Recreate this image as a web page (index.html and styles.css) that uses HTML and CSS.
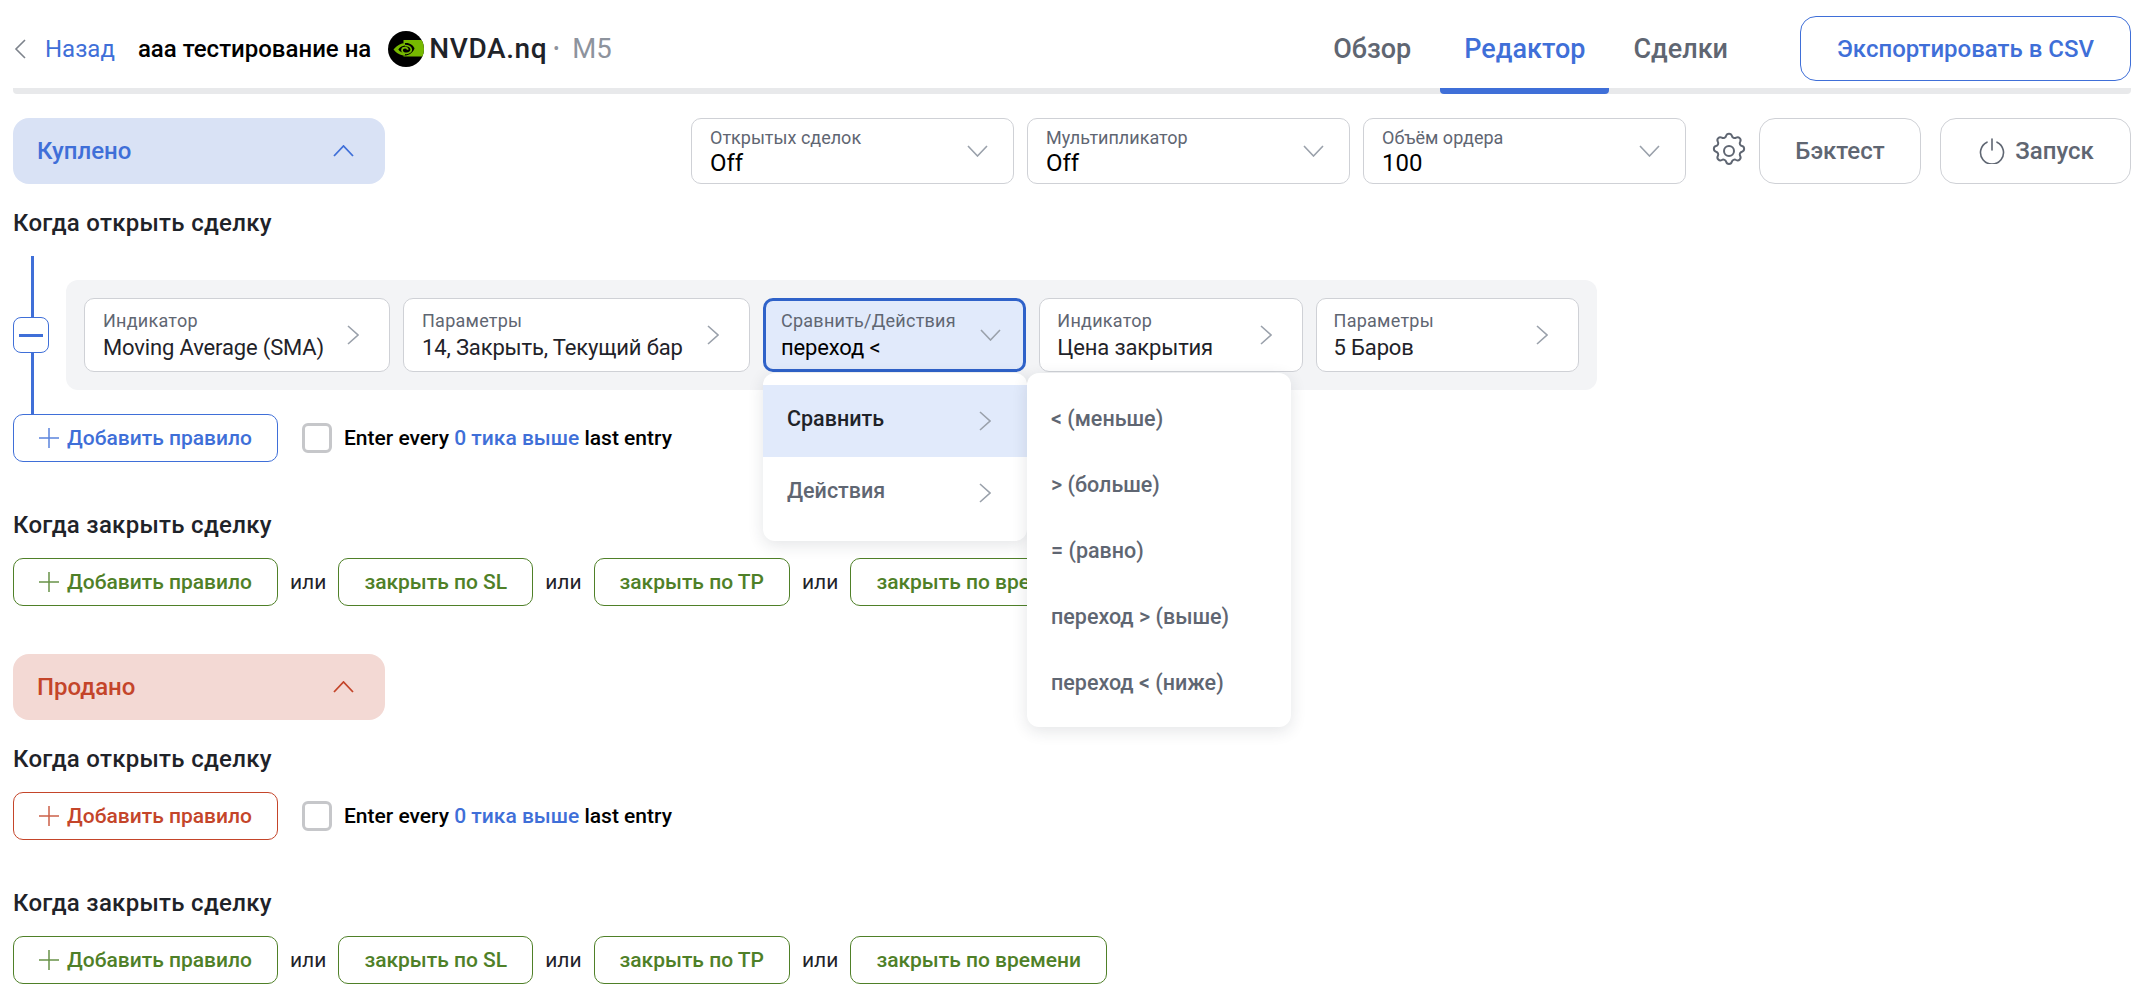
FILE: index.html
```html
<!DOCTYPE html>
<html lang="ru">
<head>
<meta charset="utf-8">
<title>Редактор</title>
<link rel="stylesheet" href="styles.css">
</head>
<body>
<div class="app">
  <header class="topbar">
    <a class="back">
      <svg class="back-icon" viewBox="0 0 12 20"><path d="M11 1 2 10l9 9"/></svg>
      <span>Назад</span>
    </a>
    <span class="title">ааа тестирование на</span>
    <svg class="logo" viewBox="0 0 36 36">
      <defs><clipPath id="c"><circle cx="18" cy="18" r="18"/></clipPath></defs>
      <g clip-path="url(#c)">
        <rect width="36" height="36" fill="#000"/>
        <path d="M15.500 9H36v16.500H15.500z" fill="#76b900"/>
        <path d="M5.500 18.500C9 14.500 13 12 18 12c4.500 0 7.500 2.500 8.500 5.500-1 3-4 6-8.500 7-5.500 0-9.500-2.500-12.500-6Z" fill="#000"/>
        <path d="M5.500 18.500C9 14.500 13 12 17 12v2.500c-3 .2-5.300 2-6.700 4 1.600 2.200 3.800 3.500 6.700 3.700v2.300c-5 0-8.500-2.500-11.500-6Z" fill="#76b900"/>
        <path d="M17 14.500c3.600 0 6 1.800 6.300 4 .2 2-2 3.800-5 3.800-2.200 0-4-1.200-4.300-3 0-1.700 1.300-2.600 3-2.600 1.500 0 2.600.8 2.700 2" fill="none" stroke="#76b900" stroke-width="1.700"/>
      </g>
    </svg>
    <span class="ticker">NVDA.nq</span>
    <span class="dot">•</span>
    <span class="frame">M5</span>
    <nav class="tabs">
      <a class="tab">Обзор</a>
      <a class="tab tab-active">Редактор</a>
      <a class="tab">Сделки</a>
    </nav>
    <button class="export">Экспортировать в CSV</button>
  </header>

  <div class="toolbar">
    <button class="pill pill-blue">
      <span>Куплено</span>
      <svg class="chev-up" viewBox="0 0 21 12"><path d="M1 11 10.500 1 20 11"/></svg>
    </button>
    <div class="controls">
      <div class="select">
        <div class="field"><span class="label">Открытых сделок</span><span class="value">Off</span></div>
        <svg class="chev-down" viewBox="0 0 21 12"><path d="M1 1l9.500 10L20 1"/></svg>
      </div>
      <div class="select">
        <div class="field"><span class="label">Мультипликатор</span><span class="value">Off</span></div>
        <svg class="chev-down" viewBox="0 0 21 12"><path d="M1 1l9.500 10L20 1"/></svg>
      </div>
      <div class="select">
        <div class="field"><span class="label">Объём ордера</span><span class="value">100</span></div>
        <svg class="chev-down" viewBox="0 0 21 12"><path d="M1 1l9.500 10L20 1"/></svg>
      </div>
      <svg class="gear" viewBox="0 0 24 24"><path d="M10.300 2.900c.4-1.700 3-1.700 3.400 0a1.750 1.750 0 0 0 2.600 1.100c1.500-.9 3.300.8 2.400 2.400a1.750 1.750 0 0 0 1.100 2.600c1.700.4 1.700 3 0 3.400a1.750 1.750 0 0 0-1.100 2.600c.9 1.500-.8 3.300-2.400 2.400a1.750 1.750 0 0 0-2.600 1.100c-.4 1.700-3 1.700-3.400 0a1.750 1.750 0 0 0-2.600-1.100c-1.500.9-3.300-.8-2.400-2.400a1.750 1.750 0 0 0-1.100-2.600c-1.700-.4-1.700-3 0-3.400a1.750 1.750 0 0 0 1.100-2.600c-.9-1.500.8-3.300 2.400-2.400 1 .6 2.300.1 2.600-1.100Z"/><circle cx="12" cy="12" r="3"/></svg>
      <button class="action action-test">Бэктест</button>
      <button class="action action-run">
        <svg class="power" viewBox="0 0 26 26"><path d="M13 1v11"/><path d="M8 4.200a11.500 11.500 0 1 0 10 0"/></svg>
        <span>Запуск</span>
      </button>
    </div>
  </div>

  <h2 class="heading">Когда открыть сделку</h2>
  <div class="rule-block">
    <span class="tree-line"></span>
    <span class="tree-toggle"><i></i></span>
    <div class="rule-row">
      <div class="card card-a">
        <div class="field"><span class="label">Индикатор</span><span class="value">Moving Average (SMA)</span></div>
        <svg class="chev-right" viewBox="0 0 12 20"><path d="M1 1l10 9-10 9"/></svg>
      </div>
      <div class="card card-b">
        <div class="field"><span class="label">Параметры</span><span class="value">14, Закрыть, Текущий бар</span></div>
        <svg class="chev-right" viewBox="0 0 12 20"><path d="M1 1l10 9-10 9"/></svg>
      </div>
      <div class="card card-c card-focus">
        <div class="field"><span class="label">Сравнить/Действия</span><span class="value">переход &lt;</span></div>
        <svg class="chev-down" viewBox="0 0 21 12"><path d="M1 1l9.500 10L20 1"/></svg>
        <div class="menu menu-main">
          <div class="menu-row menu-row-active"><span>Сравнить</span><svg class="chev-right" viewBox="0 0 12 20"><path d="M1 1l10 9-10 9"/></svg></div>
          <div class="menu-row"><span>Действия</span><svg class="chev-right" viewBox="0 0 12 20"><path d="M1 1l10 9-10 9"/></svg></div>
          <div class="menu menu-sub">
            <div class="sub-row">&lt; (меньше)</div>
            <div class="sub-row">&gt; (больше)</div>
            <div class="sub-row">= (равно)</div>
            <div class="sub-row">переход &gt; (выше)</div>
            <div class="sub-row">переход &lt; (ниже)</div>
          </div>
        </div>
      </div>
      <div class="card card-c">
        <div class="field"><span class="label">Индикатор</span><span class="value">Цена закрытия</span></div>
        <svg class="chev-right" viewBox="0 0 12 20"><path d="M1 1l10 9-10 9"/></svg>
      </div>
      <div class="card card-c">
        <div class="field"><span class="label">Параметры</span><span class="value">5 Баров</span></div>
        <svg class="chev-right" viewBox="0 0 12 20"><path d="M1 1l10 9-10 9"/></svg>
      </div>
    </div>
  </div>
  <div class="entry-row">
    <button class="rule-btn blue"><svg class="plus" viewBox="0 0 20 20"><path d="M10 0v20M0 10h20"/></svg>Добавить правило</button>
    <span class="check"></span>
    <span class="entry-text">Enter every <b>0 тика выше</b> last entry</span>
  </div>

  <h2 class="heading heading-close">Когда закрыть сделку</h2>
  <div class="close-row">
    <button class="rule-btn green"><svg class="plus" viewBox="0 0 20 20"><path d="M10 0v20M0 10h20"/></svg>Добавить правило</button>
    <span class="or">или</span>
    <button class="rule-btn green plain">закрыть по SL</button>
    <span class="or">или</span>
    <button class="rule-btn green plain">закрыть по ТР</button>
    <span class="or">или</span>
    <button class="rule-btn green plain">закрыть по времени</button>
  </div>

  <button class="pill pill-red">
    <span>Продано</span>
    <svg class="chev-up" viewBox="0 0 21 12"><path d="M1 11 10.500 1 20 11"/></svg>
  </button>

  <h2 class="heading">Когда открыть сделку</h2>
  <div class="entry-row entry-row-plain">
    <button class="rule-btn red"><svg class="plus" viewBox="0 0 20 20"><path d="M10 0v20M0 10h20"/></svg>Добавить правило</button>
    <span class="check"></span>
    <span class="entry-text">Enter every <b>0 тика выше</b> last entry</span>
  </div>

  <h2 class="heading heading-close">Когда закрыть сделку</h2>
  <div class="close-row">
    <button class="rule-btn green"><svg class="plus" viewBox="0 0 20 20"><path d="M10 0v20M0 10h20"/></svg>Добавить правило</button>
    <span class="or">или</span>
    <button class="rule-btn green plain">закрыть по SL</button>
    <span class="or">или</span>
    <button class="rule-btn green plain">закрыть по ТР</button>
    <span class="or">или</span>
    <button class="rule-btn green plain">закрыть по времени</button>
  </div>
</div>
</body>
</html>
```

FILE: styles.css
```css
* { box-sizing: border-box; }
html, body { margin: 0; padding: 0; background: #fff; }
body {
  font-family: Roboto, "Noto Sans", sans-serif;
  color: #1f2329;
  height: 996px;
  overflow: hidden;
}
button { font-family: inherit; background: #fff; cursor: pointer; padding: 0; margin: 0; }
svg { display: block; flex: none; fill: none; }
.app { padding: 0 19px 0 13px; }

/* top bar */
.topbar {
  display: flex;
  align-items: center;
  height: 94px;
  padding-top: 9px;
  border-bottom: 6px solid #e8e9eb;
  border-radius: 0 0 4px 4px;
}
.back { display: flex; align-items: center; gap: 19px; color: #3f6fd8; font-size: 24px; margin-left: 1px; }
.back-icon { width: 12px; height: 20px; stroke: #7d838c; stroke-width: 1.600; }
.title { margin-left: 23px; font-size: 24px; font-weight: 500; color: #000; }
.logo { width: 36px; height: 36px; margin-left: 17px; }
.ticker { margin-left: 5px; font-size: 28px; letter-spacing: .6px; color: #1f2329; font-weight: 500; }
.dot { margin-left: 6px; color: #8d939d; font-size: 18px; }
.frame { margin-left: 13px; font-size: 27.500px; color: #8d939d; }
.tabs { display: flex; align-self: stretch; margin-left: auto; gap: 5px; }
.tab {
  display: flex;
  align-items: center;
  padding: 0 24px;
  height: 85px;
  border-bottom: 6px solid transparent;
  border-radius: 0 0 4px 4px;
  font-size: 27px;
  font-weight: 500;
  color: #5f6672;
}
.tab:last-child { margin-left: -5px; }
.tab-active { color: #3f6fd8; border-bottom-color: #3f6fd8; }
.export {
  margin-left: 48px;
  width: 331px;
  height: 65px;
  border: 1px solid #3f6fd8;
  border-radius: 16px;
  color: #3f6fd8;
  font-size: 24px;
  font-weight: 500;
}

/* toolbar */
.toolbar { display: flex; justify-content: space-between; margin-top: 24px; }
.pill {
  display: flex;
  align-items: center;
  justify-content: space-between;
  width: 372px;
  height: 66px;
  padding: 0 31px 0 24px;
  border: 0;
  border-radius: 16px;
  font-size: 24px;
  font-weight: 500;
}
.pill-blue { background: #d9e2f5; color: #3f6fd8; }
.pill-red { background: #f3d9d4; color: #c4452a; margin-top: 48px; }
.chev-up { width: 21px; height: 12px; stroke: currentColor; stroke-width: 1.800; }
.controls { display: flex; align-items: center; }
.select {
  display: flex;
  align-items: center;
  justify-content: space-between;
  width: 323px;
  height: 66px;
  margin-right: 13px;
  padding: 0 25px 0 18px;
  border: 1px solid #cfd1d6;
  border-radius: 10px;
}
.select:nth-child(3) { margin-right: 23px; }
.field { display: flex; flex-direction: column; white-space: nowrap; }
.label { font-size: 18px; line-height: 24px; color: #5f6672; }
.value { font-size: 24px; line-height: 26px; color: #000; }
.chev-down { width: 21px; height: 12px; stroke: #9aa1ab; stroke-width: 1.600; }
.gear { width: 40px; height: 40px; stroke: #5f6672; stroke-width: 1.200; stroke-linejoin: round; }
.action {
  display: flex;
  align-items: center;
  justify-content: center;
  height: 66px;
  border: 1px solid #cfd1d6;
  border-radius: 16px;
  color: #5f6672;
  font-size: 24px;
  font-weight: 500;
}
.action-test { width: 162px; margin-left: 10px; }
.action-run { width: 191px; margin-left: 19px; padding-left: 2px; gap: 10px; }
.power { width: 26px; height: 26px; stroke: #5f6672; stroke-width: 1.600; stroke-linecap: round; }

/* rules */
.heading { margin: 23px 0 0; font-size: 24px; line-height: 32px; font-weight: 500; letter-spacing: .3px; color: #1f2329; }
.heading-close { margin-top: 47px; }
.rule-block { position: relative; margin-top: 17px; padding: 24px 0 24px 53px; }
.tree-line { position: absolute; left: 18px; top: 0; bottom: 0; width: 3px; background: #3f6fd8; }
.tree-toggle {
  position: absolute;
  left: 0;
  top: 61px;
  width: 36px;
  height: 36px;
  display: flex;
  align-items: center;
  justify-content: center;
  background: #fff;
  border: 1px solid #3f6fd8;
  border-radius: 8px;
}
.tree-toggle i { display: block; width: 24px; height: 3px; background: #3f6fd8; }
.rule-row {
  display: flex;
  gap: 13px;
  width: 1531px;
  padding: 18px;
  background: #f3f4f6;
  border-radius: 12px;
}
.card {
  display: flex;
  align-items: center;
  justify-content: space-between;
  height: 74px;
  padding: 0 30px 0 18px;
  background: #fff;
  border: 1px solid #cfd1d6;
  border-radius: 10px;
  position: relative;
}
.card .label { line-height: 26px; letter-spacing: .25px; }
.card .value { font-size: 22px; line-height: 28px; letter-spacing: -.15px; color: #1f2329; }
.card-a { width: 306px; }
.card-b { width: 347px; }
.card-c { width: 263.300px; padding-left: 17px; }
.card-focus { background: #e1eafb; border: 3px solid #2f62c9; padding: 0 22px 0 15px; z-index: 2; }
.card-focus .value { color: #000; }
.chev-right { width: 12px; height: 20px; stroke: #9aa1ab; stroke-width: 1.600; }

/* menus */
.menu { position: absolute; background: #fff; border-radius: 12px; box-shadow: 0 4px 16px rgba(30, 40, 60, .12); }
.menu-main { left: -3px; top: calc(100% + 4px); width: 264px; padding: 12px 0; }
.menu-sub { left: 264px; top: 0; width: 264px; padding: 12px 0; }
.menu-row {
  display: flex;
  align-items: center;
  justify-content: space-between;
  height: 72px;
  padding: 0 36px 0 24px;
  font-size: 21.500px;
  font-weight: 500;
  color: #5f6672;
}
.menu-row span { padding-bottom: 5px; }
.menu-row-active { background: #e1eafb; color: #1f2329; }
.sub-row { display: flex; align-items: center; height: 66px; padding-left: 24px; font-size: 21.500px; font-weight: 500; color: #5f6672; }

/* rule buttons */
.entry-row, .close-row { display: flex; align-items: center; }
.entry-row-plain { margin-top: 17px; }
.close-row { margin-top: 17px; position: relative; }
.rule-btn {
  display: flex;
  align-items: center;
  justify-content: center;
  gap: 8px;
  width: 265px;
  height: 48px;
  border: 1px solid currentColor;
  border-radius: 10px;
  font-size: 21px;
  font-weight: 500;
}
.plain { width: auto; padding: 0 25px; }
.blue { color: #3f6fd8; }
.green { color: #4f8028; }
.red { color: #c4452a; }
.plus { width: 20px; height: 20px; stroke: currentColor; stroke-width: 1.500; opacity: .85; }
.check { width: 30px; height: 30px; margin-left: 24px; border: 3px solid #c6c7ca; border-radius: 6px; background: #fff; }
.entry-text { margin-left: 12px; font-size: 21px; font-weight: 500; color: #000; }
.entry-text b { font-weight: 500; color: #3f6fd8; }
.or { margin: 0 12px; font-size: 21px; color: #1f2329; }
```
